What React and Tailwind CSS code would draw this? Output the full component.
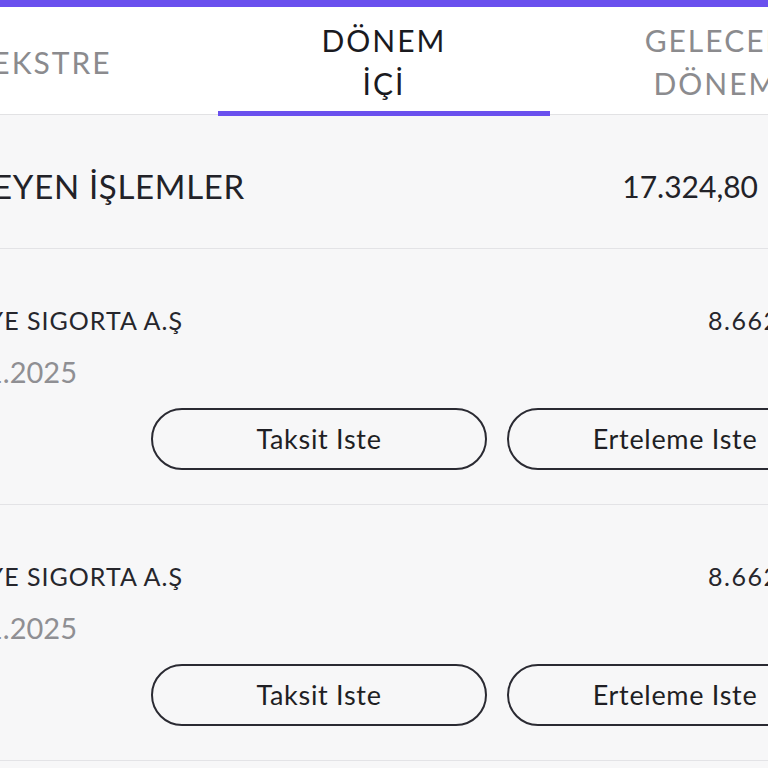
import React from "react";

const font = { fontFamily: "Lato, 'Noto Sans', sans-serif" };

const Item = ({ title, date, amount }) => {
  return (
    <div className="w-[882px] pr-[39px] pt-[57px] pb-[34px] border-b-[1.5px] border-[#e3e3e6]">
      {/* title + amount */}
      <div className="flex justify-between items-center h-[30px]">
        <div className="w-[183px] overflow-hidden flex justify-end whitespace-nowrap text-[25px] tracking-[1px] text-[#26262c]">
          <span>{title}</span>
        </div>
        <div className="w-[135px] whitespace-nowrap text-[25px] tracking-[1.5px] text-[#26262c]">{amount}</div>
      </div>

      {/* date */}
      <div className="mt-[18px] h-[36px] flex items-center">
        <div className="w-[77px] overflow-hidden flex justify-end whitespace-nowrap text-[29px] text-[#8f8f93]">
          <span>{date}</span>
        </div>
      </div>

      {/* buttons */}
      <div className="mt-[18px] flex justify-end gap-[20px]">
        <button className="w-[336px] h-[62px] rounded-full border-[2.5px] border-[#2a2a32] text-[27px] tracking-[0.7px] text-[#1f1f24] flex items-center justify-center">
          Taksit Iste
        </button>
        <button className="w-[336px] h-[62px] rounded-full border-[2.5px] border-[#2a2a32] text-[27px] tracking-[0.7px] text-[#1f1f24] flex items-center justify-center">
          Erteleme Iste
        </button>
      </div>
    </div>
  );
};

export default function App() {
  return (
    <div style={font} className="w-[768px] h-[768px] overflow-hidden bg-[#f7f7f8]">
      {/* top bar */}
      <div className="h-[7px] bg-[#6a50ee]" />

      {/* tabs */}
      <div className="bg-white border-b-[1.5px] border-[#e2e2e4]">
        <div className="w-[996px] -ml-[114px] grid grid-cols-3 h-[107px]">
          <div className="flex items-center justify-center text-[30px] tracking-[2px] leading-[43px] text-[#8b8b8e] pt-[3px]">
            EKSTRE
          </div>
          <div className="relative flex flex-col items-center justify-center text-[30px] tracking-[2px] leading-[43px] text-[#1a1a1f] text-center pt-[3px]">
            <span>DÖNEM</span>
            <span>İÇİ</span>
            <div className="absolute left-0 right-0 -bottom-[1.5px] h-[5px] bg-[#6a50ee]" />
          </div>
          <div className="flex flex-col items-center justify-center text-[30px] tracking-[2px] leading-[43px] text-[#8b8b8e] text-center pt-[3px]">
            <span>GELECEK</span>
            <span>DÖNEM</span>
          </div>
        </div>
      </div>

      {/* summary */}
      <div className="w-[882px] h-[134px] pt-[10px] flex items-center justify-between border-b-[1.5px] border-[#e3e3e6]">
        <div className="w-[245px] overflow-hidden flex justify-end whitespace-nowrap text-[33px] tracking-[0.7px] text-[#222228]">
          <span>BEKLEYEN İŞLEMLER</span>
        </div>
        <div className="mr-[124px] whitespace-nowrap text-[30px] text-[#222228]">17.324,80</div>
      </div>

      <Item title="TÜRKİYE SIGORTA A.Ş" date="15.01.2025" amount="8.662,40 TL" />
      <Item title="TÜRKİYE SIGORTA A.Ş" date="15.01.2025" amount="8.662,40 TL" />
    </div>
  );
}
